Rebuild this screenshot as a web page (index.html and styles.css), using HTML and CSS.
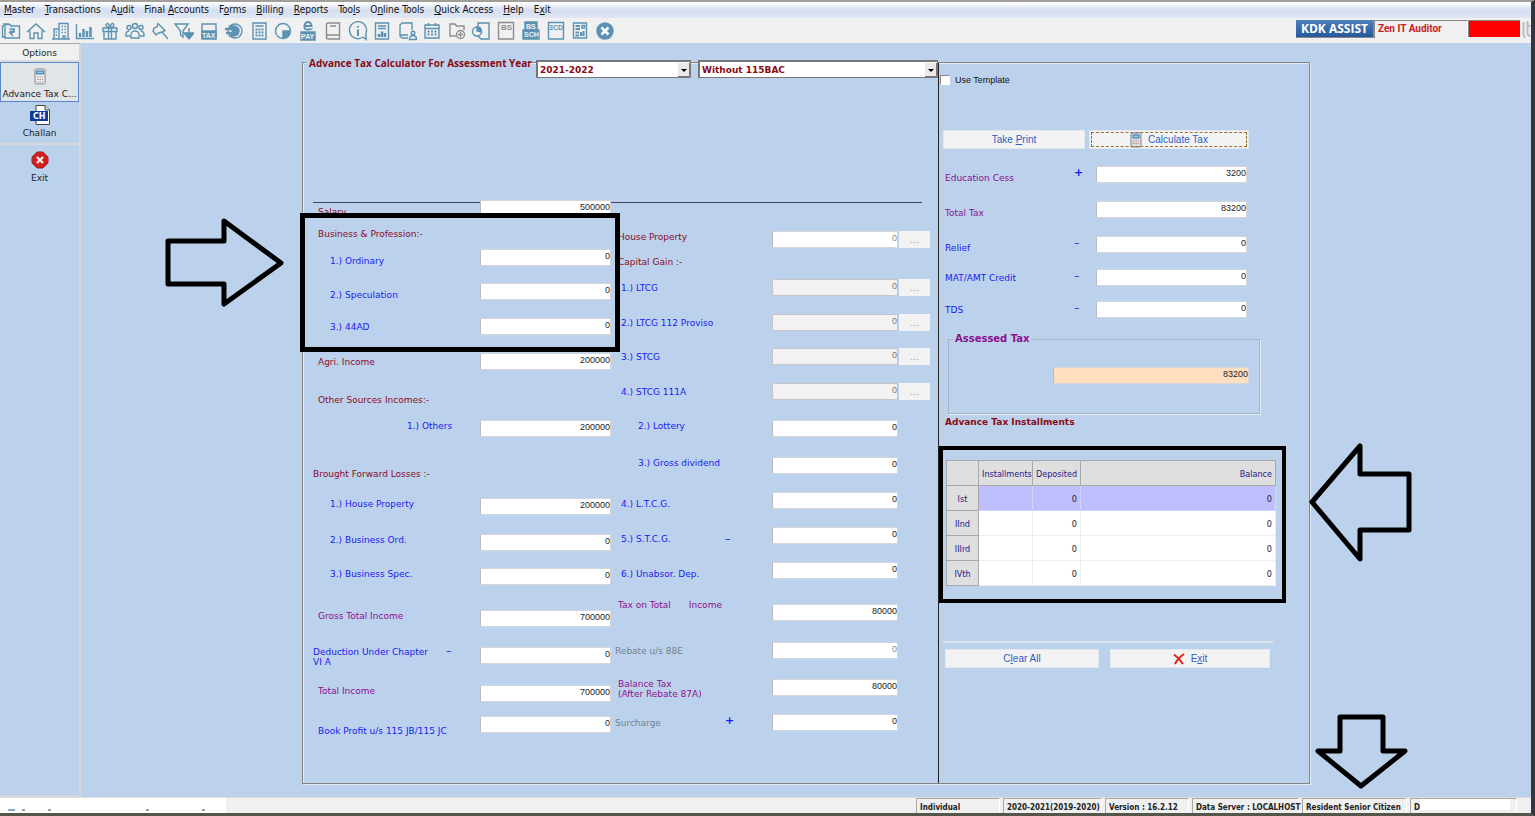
FILE: index.html
```html
<!DOCTYPE html>
<html lang="en">
<head>
    <meta charset="UTF-8">
    <meta name="viewport" content="width=device-width, initial-scale=1.0">
    <title>Advance Tax Calculator</title>
    <link rel="stylesheet" href="styles.css">
</head>
<body>

<nav class="menubar">
    <a href="#"><u>M</u>aster</a>
    <a href="#"><u>T</u>ransactions</a>
    <a href="#">A<u>u</u>dit</a>
    <a href="#">Final <u>A</u>ccounts</a>
    <a href="#">F<u>o</u>rms</a>
    <a href="#"><u>B</u>illing</a>
    <a href="#"><u>R</u>eports</a>
    <a href="#">Too<u>l</u>s</a>
    <a href="#">O<u>n</u>line Tools</a>
    <a href="#"><u>Q</u>uick Access</a>
    <a href="#"><u>H</u>elp</a>
    <a href="#">E<u>x</u>it</a>
</nav>

<div class="toolbar">
    <div class="tools">
        <button aria-label="Rupee folder"><svg viewBox="0 0 20 20"><path d="M4 16H1.500V5H3M4 3.500H9L10 5H18.500V17H4ZM2 3H8"/><path d="M8.500 8H14M8.500 10.500H14M10 8Q13 8 13 10T9 12L12 15"/></svg></button>
        <button aria-label="Home"><svg viewBox="0 0 20 20"><path d="M1 11 10 3 19 11M4 9.500V17.500H8V12H12V17.500H16V9.500"/></svg></button>
        <button aria-label="Company"><svg viewBox="0 0 20 20"><path d="M8 18V2.500H17V18ZM8 8H3V18H8M1 18H19M12 18V15H14V18"/><path stroke-dasharray="1.500 1.500" d="M10.500 5.500H16M10.500 8.500H16M10.500 11.500H16M4.500 11H7M4.500 14H7"/></svg></button>
        <button aria-label="Chart"><svg viewBox="0 0 20 20"><path d="M1.500 3V17.500H19"/><path stroke-width="2.500" d="M5 16V12M8.500 16V8M12 16V10M15.500 16V6"/></svg></button>
        <button aria-label="Gift"><svg viewBox="0 0 20 20"><path d="M3 7H17V10.500H3ZM4 10.500V18H16V10.500M8.500 7V18M11.500 7V18M10 7Q4 5 7 2.500 9 2 10 7 11 2 13 2.500 16 5 10 7"/></svg></button>
        <button aria-label="Group"><svg viewBox="0 0 20 20"><circle cx="10" cy="5" r="2.500"/><circle cx="4" cy="6.500" r="2"/><circle cx="16" cy="6.500" r="2"/><path d="M6 17Q5 10 10 10T14 17ZM5 15H1Q.5 10 4.500 10M15 15H19Q19.500 10 15.500 10"/></svg></button>
        <button aria-label="Pin"><svg viewBox="0 0 20 20"><path d="M8 2.500 15 9.500 12 11 8.500 12 6 14 3 10 4 7 7 6ZM12 11 18 18"/></svg></button>
        <button aria-label="Filter"><svg viewBox="0 0 20 20"><path d="M1 3H14L9 10V16L6.500 14V10ZM15 7V15"/><path class="solid" d="M10 12H20L15 18Z"/></svg></button>
        <button aria-label="Tax"><svg viewBox="0 0 20 20"><path d="M3 3H17V17H3Z"/><path class="solid" d="M3 10H17V18H3Z"/><text x="3" y="17">TAX</text></svg></button>
        <button aria-label="Transfer"><svg viewBox="0 0 20 20"><circle cx="11" cy="10" r="7"/><path class="solid" d="M6 5H10Q15 6 15 10T10 15H6Q11 11 6 5Z"/><path stroke-width="2.500" d="M1 8H8M2 12H8"/></svg></button>
        <button aria-label="Calculator"><svg viewBox="0 0 20 20"><path d="M4 2H17V18H4ZM6.500 5H14.500"/><path stroke-width="2" stroke-dasharray="2 1" d="M6.500 8.500H15M6.500 11.500H15M6.500 14.500H15"/></svg></button>
        <button aria-label="Pie"><svg viewBox="0 0 20 20"><circle cx="10" cy="10" r="7.500"/><path class="solid" d="M10 10H17Q17 17 10 17Z"/></svg></button>
        <button aria-label="E-pay"><svg viewBox="0 0 20 20"><path stroke-width="2" d="M6.500 5H13.500Q13 1 10 1T6.500 5 10 8.500 13.500 7.500"/><path class="solid" d="M3 11H17V19H3Z"/><text x="3" y="18">PAY</text></svg></button>
        <button class="gray" aria-label="Book"><svg viewBox="0 0 20 20"><path d="M16.500 14V2H5Q3.500 2 3.500 4V16Q3.500 18 5 18H16.500V14H5Q3.500 14 3.500 16M7 5H13"/></svg></button>
        <button aria-label="Information"><svg viewBox="0 0 20 20"><path d="M15 16A8.500 8.500 0 1 1 18 12M15 16 18 18.500V12"/><path stroke-width="2" d="M10 8.500V15M10 5V6.500"/></svg></button>
        <button aria-label="Report"><svg viewBox="0 0 20 20"><path d="M3.500 2H16.500V18H3.500ZM6 5H14M6 7.500H14"/><path stroke-width="2.500" d="M7 16V13M10 16V10.500M13 16V12"/></svg></button>
        <button aria-label="User book"><svg viewBox="0 0 20 20"><path d="M15 9V2H5L3 4V15L5 17H11M3 14H11"/><circle cx="16" cy="12" r="1.800"/><path d="M12.500 18.500Q12.500 14.500 16 14.500T19.500 18.500Z"/></svg></button>
        <button aria-label="Calendar"><svg viewBox="0 0 20 20"><path d="M3 4H17V17H3ZM3 7.500H17M6.500 2V5M13.500 2V5"/><path stroke-width="2" stroke-dasharray="2 1.500" d="M5.500 10.500H15M5.500 13.500H15"/></svg></button>
        <button class="gray" aria-label="Add folder"><svg viewBox="0 0 20 20"><path d="M10 15H3V3H8L9.500 5H17V9"/><circle cx="13.500" cy="13.500" r="4"/><path d="M13.500 11V16M11 13.500H16"/></svg></button>
        <button aria-label="Page shape"><svg viewBox="0 0 20 20"><path d="M7 6V2H18V18H10L7 15"/><circle cx="6" cy="10.500" r="4.500"/><path class="solid" d="M6 10V6Q10.500 6 10.500 11Z"/></svg></button>
        <button class="gray" aria-label="Balance sheet"><svg viewBox="0 0 20 20"><path d="M2.500 1.500H17.500V18H2.500Z"/><text class="big" x="5" y="9">BS</text></svg></button>
        <button aria-label="BS schedule"><svg viewBox="0 0 20 20"><path class="solid" d="M4 1H16V9H18V18H2V9H4Z"/><text x="5" y="8">BS</text><text x="3" y="16">SCH</text></svg></button>
        <button aria-label="3CD"><svg viewBox="0 0 20 20"><path d="M2.500 1.500H17.500V18H2.500Z"/><text x="3" y="9">3CD</text></svg></button>
        <button aria-label="Dashboard"><svg viewBox="0 0 20 20"><path d="M3.500 2H16.500V17H3.500ZM12 4.500H14.500V7H12Z"/><path stroke-width="2" d="M5.500 5H10M5.500 8H10M5.500 11.500H9M5.500 14.500H9M11 15V11M13.500 15V10"/></svg></button>
        <button aria-label="Close"><svg viewBox="0 0 20 20"><circle class="solid" cx="10" cy="10" r="8"/><path class="cross" d="M6.500 6.500 13.500 13.500M13.500 6.500 6.500 13.500"/></svg></button>
    </div>
    <div class="assist">
        <button class="kdk">KDK ASSIST</button>
        <span class="product">Zen IT Auditor</span>
        <span class="alert"></span>
        <svg class="edge-logo" viewBox="0 0 10 18"><path d="M3 2V14Q3 17 5 17M7 1V13Q7 16 10 16M6 6H10"/></svg>
    </div>
</div>

<div class="workspace">
    <aside class="sidebar">
        <h3>Options</h3>
        <button class="option selected">
            <svg width="16" height="18" viewBox="0 0 16 18"><rect x="3" y="1" width="10" height="15" rx="1" fill="#eee" stroke="#888"/><path d="M4.500 3H11.500V6H4.500Z" fill="#7fd0ee" stroke="#47a"/><path d="M5 9H11M5 11.500H11M5 14H11" stroke="#a88" stroke-dasharray="1.500 1"/></svg>
            <span>Advance Tax C...</span>
        </button>
        <button class="option challan">
            <svg width="20" height="20" viewBox="0 0 20 20"><path d="M6 .5H15L19.500 5V19.500H6Z" fill="#fff" stroke="#444"/><path d="M15 .5V5H19.500" fill="#ddd" stroke="#444"/><path d="M0 6H18V16H0Z" fill="#0b3c9c"/><text x="3" y="14" class="ch">CH</text></svg>
            <span>Challan</span>
        </button>
        <button class="option exit">
            <svg width="18" height="18" viewBox="0 0 18 18"><path d="M6 1H12L17 6V12L12 17H6L1 12V6Z" fill="#d3201f" stroke="#8d2a2a"/><path d="M6 6 12 12M12 6 6 12" stroke="#fff" stroke-width="2"/></svg>
            <span>Exit</span>
        </button>
    </aside>

    <main>
        <form class="panel" onsubmit="return false">
            <div class="left">
                <div class="panel-head">
                    <h2>Advance Tax Calculator For Assessment Year</h2>
                    <select class="year" aria-label="Assessment year"><option>2021-2022</option></select>
                    <select class="scheme" aria-label="Tax scheme"><option>Without 115BAC</option></select>
                </div>

                <div class="incomes">
                    <!-- Income heads -->
                    <div class="column heads">
                        <div class="row low"><label class="maroon" for="salary">Salary</label><input id="salary" value="500000"></div>
                        <div class="row maroon"><span class="caption">Business &amp; Profession:-</span></div>
                        <div class="row low sub"><label for="ordinary">1.) Ordinary</label><input id="ordinary" value="0"></div>
                        <div class="row low sub"><label for="speculation">2.) Speculation</label><input id="speculation" value="0"></div>
                        <div class="row mid sub"><label for="ad44">3.) 44AD</label><input id="ad44" value="0"></div>
                        <div class="row mid"><label class="maroon" for="agri">Agri. Income</label><input id="agri" value="200000"></div>
                        <div class="row maroon"><span class="caption">Other Sources Incomes:-</span></div>
                        <div class="row deep"><label for="others">1.) Others</label><input id="others" value="200000"></div>
                        <div class="row maroon flush"><span class="caption">Brought Forward Losses :-</span></div>
                        <div class="row sub"><label for="bfHouse">1.) House Property</label><input id="bfHouse" value="200000"></div>
                        <div class="row sub"><label for="bfOrd">2.) Business Ord.</label><input id="bfOrd" value="0"></div>
                        <div class="row sub"><label for="bfSpec">3.) Business Spec.</label><input id="bfSpec" value="0"></div>
                        <div class="row"><label class="purple" for="gross">Gross Total Income</label><input id="gross" value="700000"></div>
                        <div class="row flush two-line"><label for="deduction">Deduction Under Chapter<br>VI A</label><span class="sign">&ndash;</span><input id="deduction" value="0"></div>
                        <div class="row"><label class="purple" for="total">Total Income</label><input id="total" value="700000"></div>
                        <div class="row lowest"><label for="book">Book Profit u/s 115 JB/115 JC</label><input id="book" value="0"></div>
                    </div>

                    <!-- Gains and tax -->
                    <div class="column gains">
                        <div class="row"><label class="maroon" for="house">House Property</label><input id="house" class="dim" value="0"><button>...</button></div>
                        <div class="row maroon"><span class="caption">Capital Gain :-</span></div>
                        <div class="row mid sub"><label for="ltcg">1.) LTCG</label><input id="ltcg" value="0" disabled><button>...</button></div>
                        <div class="row mid sub"><label for="ltcg112">2.) LTCG 112 Proviso</label><input id="ltcg112" value="0" disabled><button>...</button></div>
                        <div class="row mid sub"><label for="stcg">3.) STCG</label><input id="stcg" value="0" disabled><button>...</button></div>
                        <div class="row mid sub"><label for="stcg111">4.) STCG 111A</label><input id="stcg111" value="0" disabled><button>...</button></div>
                        <div class="row deep"><label for="lottery">2.) Lottery</label><input id="lottery" value="0"></div>
                        <div class="row deep"><label for="dividend">3.) Gross dividend</label><input id="dividend" value="0"></div>
                        <div class="row low sub"><label for="lossL">4.) L.T.C.G.</label><input id="lossL" value="0"></div>
                        <div class="row low sub"><label for="lossS">5.) S.T.C.G.</label><span class="sign lower">&ndash;</span><input id="lossS" value="0"></div>
                        <div class="row low sub"><label for="dep">6.) Unabsor. Dep.</label><input id="dep" value="0"></div>
                        <div class="row high"><label class="purple split" for="taxTotal"><span>Tax on Total</span><span>Income</span></label><input id="taxTotal" value="80000"></div>
                        <div class="row mid flush"><label class="grey" for="rebate">Rebate u/s 88E</label><input id="rebate" class="dim" value="0"></div>
                        <div class="row two-line"><label class="purple" for="balance">Balance Tax<br>(After Rebate 87A)</label><input id="balance" value="80000"></div>
                        <div class="row mid flush"><label class="grey" for="surcharge">Surcharge</label><b class="sign">+</b><input id="surcharge" value="0"></div>
                    </div>
                </div>
            </div>

            <div class="right">
                <label class="template"><input type="checkbox"> Use Template</label>
                <div class="buttons top">
                    <button>Take <u>P</u>rint</button>
                    <button class="focused"><svg width="12" height="16" viewBox="0 0 12 16"><rect x="1" y="1" width="10" height="14" rx="1" fill="#ddd" stroke="#789"/><path d="M3 3H9V6H3Z" fill="#7fd0ee" stroke="#47a"/><path d="M3 9H9M3 11.500H9" stroke="#a88" stroke-dasharray="1.500 1"/></svg>Calculate Tax</button>
                </div>

                <div class="column taxes">
                    <div class="row low"><label class="purple" for="cess">Education Cess</label><b class="sign">+</b><input id="cess" value="3200"></div>
                    <div class="row low"><label class="purple" for="totalTax">Total Tax</label><input id="totalTax" value="83200"></div>
                    <div class="row low"><label for="relief">Relief</label><span class="sign">&ndash;</span><input id="relief" value="0"></div>
                    <div class="row mid"><label for="mat">MAT/AMT Credit</label><span class="sign">&ndash;</span><input id="mat" value="0"></div>
                    <div class="row mid"><label for="tds">TDS</label><span class="sign">&ndash;</span><input id="tds" value="0"></div>
                </div>

                <fieldset>
                    <legend>Assessed Tax</legend>
                    <input class="assessed" aria-label="Assessed tax" value="83200">
                </fieldset>

                <h4>Advance Tax Installments</h4>
                <table>
                    <thead>
                        <tr><th class="num"></th><th class="inst">Installments</th><th class="dep">Deposited</th><th>Balance</th></tr>
                    </thead>
                    <tbody>
                        <tr class="current"><th>Ist</th><td></td><td>0</td><td>0</td></tr>
                        <tr><th>IInd</th><td></td><td>0</td><td>0</td></tr>
                        <tr><th>IIIrd</th><td></td><td>0</td><td>0</td></tr>
                        <tr><th>IVth</th><td></td><td>0</td><td>0</td></tr>
                    </tbody>
                </table>

                <hr>
                <div class="buttons bottom">
                    <button>C<u>l</u>ear All</button>
                    <button><svg width="12" height="12" viewBox="0 0 12 12"><path d="M1 1.500Q6 5 10 11M11 1Q5 5 2 11" fill="none" stroke="#d22" stroke-width="2"/></svg>E<u>x</u>it</button>
                </div>
            </div>

            <!-- Highlights drawn over the form -->
            <div class="mark mark-business"></div>
            <div class="mark mark-installments"></div>
            <svg class="arrow arrow-business" width="120" height="90" viewBox="0 0 120 90"><path d="M3 23H59V3L116 45 59 86V66H3Z"/></svg>
            <svg class="arrow arrow-installments" width="104" height="120" viewBox="0 0 104 120"><path d="M3 59 51 3V31H100V87H51V116Z"/></svg>
            <svg class="arrow arrow-status" width="94" height="76" viewBox="0 0 94 76"><path d="M25 3H68V37H90L46 72 3 37H25Z"/></svg>
        </form>
    </main>
</div>

<footer class="statusbar">
    <div class="blank"><svg width="226" height="4" viewBox="0 0 226 4"><path d="M8 1H15" stroke="#8ab" stroke-width="2"/><path d="M22 1H25M48 1H51M146 1H149M202 1H205" stroke="#345"/></svg></div>
    <span class="cell individual">Individual</span>
    <span class="cell years">2020-2021(2019-2020)</span>
    <span class="cell version">Version : 16.2.12</span>
    <span class="cell server">Data Server : LOCALHOST</span>
    <span class="cell citizen">Resident Senior Citizen</span>
    <span class="cell last">D<i></i></span>
</footer>

</body>
</html>
```

FILE: styles.css
```css
* { box-sizing: border-box; }
body {
    margin: 0;
    min-height: 100vh;
    display: flex;
    flex-direction: column;
    border-top: 2px solid #a19d98;
    border-right: 4px solid #33363e;
    border-bottom: 3px solid #55564a;
    background: #bcd2ec;
    font-family: "DejaVu Sans", sans-serif;
    font-size: 9px;
    line-height: 12px;
    color: #222;
}
h2, h3, h4 { margin: 0; font-size: inherit; }
button, input, select { font: inherit; margin: 0; padding: 0; border-radius: 0; }
button { border: none; background: none; }

/* menu and toolbar */
.menubar {
    display: flex;
    gap: 10px;
    height: 16px;
    padding-left: 4px;
    background: linear-gradient(#fff, #d5def0 50%, #dfe6f5);
    font-family: "DejaVu Sans Condensed", "DejaVu Sans", sans-serif;
    font-size: 10px;
    line-height: 16px;
}
.menubar a { color: #111; text-decoration: none; white-space: nowrap; }
.toolbar { display: flex; justify-content: space-between; height: 25px; background: #f0f0f0; }
.tools { display: flex; justify-content: space-between; align-items: center; width: 616px; }
.tools button { width: 22px; height: 22px; color: #5b92b3; }
.tools .gray { color: #8d8d8d; }
.tools svg { display: block; width: 20px; height: 20px; margin: 1px; fill: none; stroke: currentColor; stroke-width: 1.4; }
.tools .solid { fill: currentColor; }
.tools .cross { stroke: #fff; stroke-width: 2.5; }
.tools text { fill: currentColor; stroke: none; font: bold 7px "Liberation Sans", sans-serif; }
.tools .big { font-size: 8px; }
.tools .solid ~ text { fill: #f0f0f0; }
.assist { display: flex; align-items: flex-start; padding-top: 2px; }
.kdk {
    width: 79px;
    height: 18px;
    border-right: 2px solid #888;
    border-bottom: 1px solid #888;
    background: linear-gradient(#4b80b8, #25599a);
    color: #fff;
    font: bold 12px/14px "Open Sans", sans-serif;
    white-space: nowrap;
}
.product {
    width: 93px;
    height: 18px;
    padding-left: 3px;
    border-top: 1px solid #888;
    border-right: 1px solid #fff;
    color: #c8201e;
    font: bold 10px/16px Roboto, sans-serif;
}
.alert { width: 52px; height: 17px; background: #f00; border-top: 1px solid #888; border-left: 1px solid #888; }
.edge-logo { width: 11px; height: 18px; fill: none; stroke: #bbb; stroke-width: 2; }

/* sidebar */
.workspace { flex: 1; display: flex; }
.sidebar { width: 81px; border-right: 2px solid #d4d8de; border-top: 1px solid #aaa; border-bottom: 2px solid #d4d8de; text-align: center; }
.sidebar h3 { height: 18px; background: #f0f0f0; border-bottom: 2px solid #dcdcdc; font-weight: normal; line-height: 18px; }
.option { display: flex; flex-direction: column; align-items: center; width: 100%; color: #222; white-space: nowrap; }
.option.selected { height: 40px; padding-top: 5px; border: 1px solid #5a86cc; background: #dfe5e8; }
.option.selected span { margin-top: 2px; }
.challan { height: 43px; padding-top: 3px; border-bottom: 2px solid #d4d8de; }
.exit { padding-top: 6px; }
.challan span, .exit span { margin-top: 2px; }
.exit span { margin-top: 3px; }
.ch { fill: #fff; font: bold 8px "DejaVu Sans", sans-serif; }

/* calculator panel */
main { flex: 1; padding: 19px 10px 12px; }
.panel {
    position: relative;
    display: flex;
    width: 100%;
    max-width: 1008px;
    margin: 0 auto;
    border: 1px solid #808488;
    box-shadow: inset 1px 1px #e4ecf5, 1px 1px #e4ecf5;
}
.left { width: 635px; padding-bottom: 50px; }
.panel-head { display: flex; margin-top: -3px; }
.panel-head h2 {
    width: 221px;
    height: 14px;
    margin: -4px 9px 0 3px;
    padding-left: 3px;
    background: #bcd2ec;
    color: #8b0a14;
    font: bold 10px/14px "Open Sans", sans-serif;
    white-space: nowrap;
}
select {
    appearance: none;
    height: 18px;
    border: 1px solid #777;
    border-width: 2px 1px 1px 2px;
    padding-left: 2px;
    background: #fff url("data:image/svg+xml,%3Csvg xmlns='http://www.w3.org/2000/svg' width='12' height='14'%3E%3Cpath d='M0 0H12V14H0Z' fill='%23e9e9e9'/%3E%3Cpath d='M0 13.500H11.500V0' fill='none' stroke='%23777'/%3E%3Cpath d='M3 6H9L6 9Z'/%3E%3C/svg%3E") no-repeat right center;
    color: #8b0a14;
    font-weight: bold;
}
.year { width: 155px; margin-right: 7px; }
.scheme { width: 240px; }
.incomes { display: grid; grid-template-columns: 300px 1fr; margin: 124px 16px 0 10px; border-top: 1px solid #445; }
.column { display: grid; align-content: start; color: #1a1af0; }
.heads { margin-top: -3px; grid-template-rows: 28px 21px 34px 35px 35px 41px 26px 48px 30px 36px 34px 42px 37px 38px 31px 17px; }
.gains { margin-top: 28px; grid-template-rows: 25px 23px 35px 34px 35px 37px 37px 35px 35px 35px 42px 38px 37px 35px 17px; }
.taxes { margin-top: 17px; grid-template-rows: 35px 35px 33px 32px 17px; }

.row { display: grid; align-items: start; white-space: nowrap; }
.heads .row { grid-template-columns: 133px 34px 131px; }
.gains .row { grid-template-columns: 112px 47px 126px 32px; }
.taxes .row { grid-template-columns: 131px 22px 151px; }
.row label, .caption { grid-column: 1; padding-left: 5px; }
.row input { grid-column: 3; }
.row button { grid-column: 4; height: 17px; margin-left: 1px; background: #f2f2f2; color: #7f9fd0; }
.taxes label { padding-left: 2px; }
.heads .flush > * { padding-left: 0; }
.gains .flush label { padding-left: 2px; }
.heads .sub label { padding-left: 17px; }
.gains .sub label { padding-left: 8px; }
.heads .deep label { padding-left: 94px; }
.gains .deep label { padding-left: 25px; }
.mid label { padding-top: 3px; }
.low label { padding-top: 6px; }
.lowest label { padding-top: 9px; }
.high label { margin-top: -5px; }
.two-line label { line-height: 10px; }
.split { display: flex; gap: 18px; }
.sign { grid-column: 2; font-size: 11px; line-height: 14px; }
.two-line .sign { line-height: 8px; }
.lower { line-height: 24px; }
.maroon { color: #8b0a28; }
.purple { color: #8a1090; }
.grey { color: #77808c; }

.row input, .assessed {
    width: 100%;
    height: 17px;
    border: 1px solid #d3d6da;
    border-left-color: #bbb;
    padding: 0 0 3px;
    background: #fff;
    color: #222;
    text-align: right;
    font-family: "Liberation Sans", sans-serif;
}
.row input.dim { color: #888; }
.row input:disabled { background: #f2f2f2; color: #777; border-color: #c4c6ca; }

/* right part */
.right { flex: 1; padding: 11px 0 0 4px; border-left: 1px solid #222; }
.template { display: flex; align-items: center; height: 11px; gap: 5px; margin-left: -3px; color: #111; font-family: "Liberation Sans", sans-serif; }
.template input { appearance: none; width: 10px; height: 10px; background: #fff; border: 1px solid #fff; border-top-color: #888; border-left-color: #888; }
.buttons { display: flex; }
.buttons button {
    display: flex;
    justify-content: center;
    align-items: center;
    height: 19px;
    background: #f3f3f3;
    border: 1px solid #e2e8f0;
    color: #2c5cc5;
    font: 10px/12px "Liberation Sans", sans-serif;
    white-space: pre;
}
.buttons svg { margin-right: 6px; }
.top { gap: 4px; margin-top: 45px; }
.top button { width: 142px; }
.top .focused { width: 160px; outline: 1px dashed #97712f; outline-offset: -3px; }
fieldset { width: 312px; height: 81px; margin: 15px 0 0 5px; padding: 22px 10px 0; border: 1px solid #aab4c0; box-shadow: 1px 1px #e4ecf5; }
legend { margin-left: -6px; padding: 0 2px; color: #8a1090; font-weight: bold; font-size: 10px; line-height: 12px; }
.assessed { display: block; width: 196px; margin-left: auto; background: #ffdfc0; }
h4 { margin: 2px 0 0 2px; color: #8b0a14; }

table {
    width: 330px;
    margin: 32px 0 0 3px;
    table-layout: fixed;
    border-collapse: collapse;
    border: 1px solid #999;
    background: #fff;
    font-family: "DejaVu Sans Condensed", "DejaVu Sans", sans-serif;
    font-size: 9px;
    line-height: 12px;
}
th, td { height: 25px; padding: 2px 3px 0; border: 1px solid #eee; text-align: right; }
th { border-color: #a8a8a8; background: #dfdfdf; color: #1a1a8a; font-weight: normal; }
tbody th { text-align: center; }
.current td { background: #bfbfff; border-color: #d5d5ff; }
.num { width: 32px; }
.inst { width: 54px; }
.dep { width: 48px; }
hr { width: 330px; height: 2px; margin: 55px 0 6px; border: none; background: #dde4ec; }
.bottom { gap: 11px; margin-left: 2px; }
.bottom button { width: 154px; }
.bottom button + button { width: 160px; }

/* highlights */
.mark { position: absolute; border: 5px solid #000; }
.mark-business { left: -3px; top: 150px; width: 320px; height: 139px; }
.mark-installments { left: 636px; top: 383px; width: 347px; height: 157px; border-width: 4px; }
.arrow { position: absolute; fill: none; stroke: #000; stroke-width: 5; stroke-linejoin: round; }
.arrow-business { left: -138px; top: 155px; }
.arrow-installments { left: 1006px; top: 380px; }
.arrow-status { left: 1012px; top: 651px; }

/* status bar */
.statusbar { display: flex; gap: 3px; height: 16px; padding-right: 14px; background: #f0f0f0; border-top: 1px solid #ddd; font: bold 8px/17px "DejaVu Sans Condensed", "DejaVu Sans", sans-serif; }
.blank { width: 226px; margin-right: auto; padding-top: 11px; background: #fff; line-height: 0; }
.cell { padding-left: 3px; border-top: 1px solid #aaa; border-left: 1px solid #aaa; border-right: 1px solid #fff; white-space: nowrap; }
.individual { width: 84px; }
.years { width: 99px; }
.version { width: 84px; }
.server { width: 107px; }
.citizen { width: 105px; }
.last { width: 107px; display: flex; overflow: hidden; }
.last i { width: 90px; height: 11px; background: #fff; }
```
